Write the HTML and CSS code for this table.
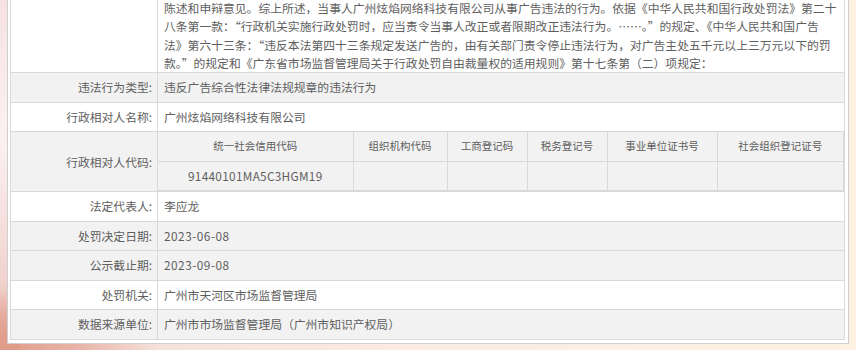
FILE: index.html
```html
<!DOCTYPE html>
<html lang="zh-CN">
<head>
    <meta charset="utf-8">
    <title>行政处罚信息</title>
    <link rel="stylesheet" href="styles.css">
</head>
<body>
    <div class="panel">
        <table class="info">
            <colgroup>
                <col class="col-label">
                <col>
            </colgroup>
            <tr class="white">
                <td class="label"></td>
                <td class="value basis">陈述和申辩意见。综上所述，当事人广州炫焰网络科技有限公司从事广告违法的行为。依据《中华人民共和国行政处罚法》第二十<br>八条第一款：“行政机关实施行政处罚时，应当责令当事人改正或者限期改正违法行为。……。”的规定、《中华人民共和国广告<br>法》第六十三条：“违反本法第四十三条规定发送广告的，由有关部门责令停止违法行为，对广告主处五千元以上三万元以下的罚<br>款。”的规定和《广东省市场监督管理局关于行政处罚自由裁量权的适用规则》第十七条第（二）项规定：</td>
            </tr>
            <tr class="grey">
                <td class="label">违法行为类型:</td>
                <td class="value">违反广告综合性法律法规规章的违法行为</td>
            </tr>
            <tr class="white">
                <td class="label">行政相对人名称:</td>
                <td class="value">广州炫焰网络科技有限公司</td>
            </tr>
            <tr class="grey">
                <td class="label">行政相对人代码:</td>
                <td class="codes">
                    <table class="code-table">
                        <colgroup>
                            <col style="width: 195px">
                            <col style="width: 94px">
                            <col style="width: 80px">
                            <col style="width: 80px">
                            <col style="width: 110px">
                            <col>
                        </colgroup>
                        <tr>
                            <th>统一社会信用代码</th>
                            <th>组织机构代码</th>
                            <th>工商登记码</th>
                            <th>税务登记号</th>
                            <th>事业单位证书号</th>
                            <th>社会组织登记证号</th>
                        </tr>
                        <tr>
                            <td>91440101MA5C3HGM19</td>
                            <td></td>
                            <td></td>
                            <td></td>
                            <td></td>
                            <td></td>
                        </tr>
                    </table>
                </td>
            </tr>
            <tr class="white">
                <td class="label">法定代表人:</td>
                <td class="value">李应龙</td>
            </tr>
            <tr class="grey">
                <td class="label">处罚决定日期:</td>
                <td class="value num">2023-06-08</td>
            </tr>
            <tr class="grey">
                <td class="label">公示截止期:</td>
                <td class="value num">2023-09-08</td>
            </tr>
            <tr class="white">
                <td class="label">处罚机关:</td>
                <td class="value">广州市天河区市场监督管理局</td>
            </tr>
            <tr class="grey">
                <td class="label">数据来源单位:</td>
                <td class="value">广州市市场监督管理局（广州市知识产权局）</td>
            </tr>
        </table>
    </div>
</body>
</html>
```

FILE: styles.css
```css
body {
    margin: 0;
    height: 350px;
    overflow: hidden;
    font-family: "Noto Sans CJK SC", "Noto Sans", sans-serif;
    font-size: 11.8px;
    color: #5e5e5e;
    background:
        radial-gradient(ellipse 160px 60px at 0 100%, #e09a88 0%, rgba(224, 154, 136, 0.6) 50%, rgba(224, 154, 136, 0) 100%),
        linear-gradient(to bottom, #f6e2e3 0%, #fbf1f1 40%, #f1d3cf 80%, #e6aa9a 100%) left top / 20px 100% no-repeat,
        linear-gradient(to right, #f3dcd8 0%, #fbece4 50%, #fdf1e2 100%);
}
.panel {
    width: 835px;
    margin: -1px 0 0 7px;
    padding: 0 3px 3px 2px;
    background: #fff;
    border: 1px solid #cfcfcf;
    border-top: none;
}
.info {
    width: 835px;
    table-layout: fixed;
    border-collapse: collapse;
    border: 1px solid #d9d9d9;
    border-top: none;
}
.col-label {
    width: 147px;
}
.info > tbody > tr > td {
    border: 1px solid #d9d9d9;
    height: 28.5px;
    padding: 0 6px;
    line-height: 18px;
    vertical-align: middle;
}
.info > tbody > tr:first-child > td {
    border-top: none;
}
.white {
    background: #fff;
}
.grey {
    background: #f2f2f2;
}
.label {
    text-align: right;
    padding-right: 5px !important;
}
.value.basis {
    line-height: 18.3px;
    white-space: nowrap;
    overflow: hidden;
}
.num {
    letter-spacing: 0.5px;
}
.info > tbody > tr > td.codes {
    padding: 0;
}
.code-table {
    width: 100%;
    table-layout: fixed;
    border-collapse: collapse;
}
.code-table th,
.code-table td {
    height: 28.5px;
    padding: 0;
    text-align: center;
    font-weight: normal;
    border-right: 1px solid #d9d9d9;
    border-bottom: 1px solid #d9d9d9;
}
.code-table th {
    font-size: 10.5px;
}
.code-table td {
    font-size: 11.8px;
    letter-spacing: 0.3px;
}
```
